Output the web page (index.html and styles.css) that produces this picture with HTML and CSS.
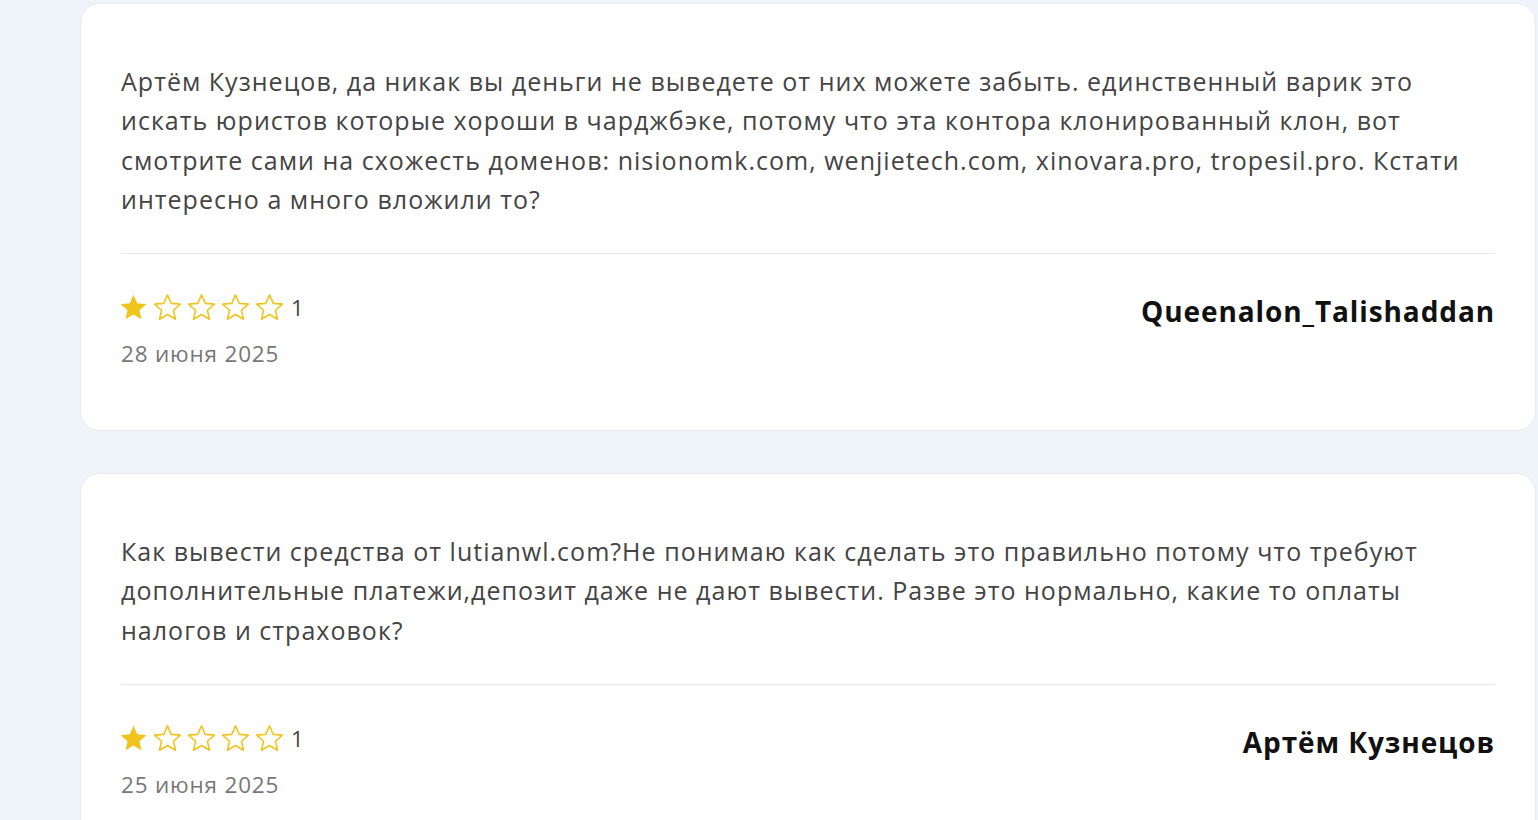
FILE: index.html
```html
<!DOCTYPE html>
<html lang="ru">
<head>
  <meta charset="UTF-8">
  <title>Отзывы</title>
  <link rel="stylesheet" href="styles.css">
</head>
<body>
  <div class="reviews">
    <div class="review">
      <p class="review-text">Артём Кузнецов, да никак вы деньги не выведете от них можете забыть. единственный варик это искать юристов которые хороши в чарджбэке, потому что эта контора клонированный клон, вот смотрите сами на схожесть доменов: nisionomk.com, wenjietech.com, xinovara.pro, tropesil.pro. Кстати интересно а много вложили то?</p>
      <div class="review-foot">
        <div class="review-meta">
          <div class="stars">
            <svg class="star" viewBox="0 0 24 24"><path class="full" d="M12 2.2l2.9 6.6 7.1.6-5.4 4.7 1.6 7-6.2-3.7-6.2 3.7 1.6-7L2 9.4l7.1-.6z"/></svg>
            <svg class="star" viewBox="0 0 24 24"><path class="empty" d="M12 2.2l2.9 6.6 7.1.6-5.4 4.7 1.6 7-6.2-3.7-6.2 3.7 1.6-7L2 9.4l7.1-.6z"/></svg>
            <svg class="star" viewBox="0 0 24 24"><path class="empty" d="M12 2.2l2.9 6.6 7.1.6-5.4 4.7 1.6 7-6.2-3.7-6.2 3.7 1.6-7L2 9.4l7.1-.6z"/></svg>
            <svg class="star" viewBox="0 0 24 24"><path class="empty" d="M12 2.2l2.9 6.6 7.1.6-5.4 4.7 1.6 7-6.2-3.7-6.2 3.7 1.6-7L2 9.4l7.1-.6z"/></svg>
            <svg class="star" viewBox="0 0 24 24"><path class="empty" d="M12 2.2l2.9 6.6 7.1.6-5.4 4.7 1.6 7-6.2-3.7-6.2 3.7 1.6-7L2 9.4l7.1-.6z"/></svg>
            <span class="score">1</span>
          </div>
          <div class="date">28 июня 2025</div>
        </div>
        <div class="author">Queenalon_Talishaddan</div>
      </div>
    </div>

    <div class="review">
      <p class="review-text">Как вывести средства от lutianwl.com?Не понимаю как сделать это правильно потому что требуют дополнительные платежи,депозит даже не дают вывести. Разве это нормально, какие то оплаты налогов и страховок?</p>
      <div class="review-foot">
        <div class="review-meta">
          <div class="stars">
            <svg class="star" viewBox="0 0 24 24"><path class="full" d="M12 2.2l2.9 6.6 7.1.6-5.4 4.7 1.6 7-6.2-3.7-6.2 3.7 1.6-7L2 9.4l7.1-.6z"/></svg>
            <svg class="star" viewBox="0 0 24 24"><path class="empty" d="M12 2.2l2.9 6.6 7.1.6-5.4 4.7 1.6 7-6.2-3.7-6.2 3.7 1.6-7L2 9.4l7.1-.6z"/></svg>
            <svg class="star" viewBox="0 0 24 24"><path class="empty" d="M12 2.2l2.9 6.6 7.1.6-5.4 4.7 1.6 7-6.2-3.7-6.2 3.7 1.6-7L2 9.4l7.1-.6z"/></svg>
            <svg class="star" viewBox="0 0 24 24"><path class="empty" d="M12 2.2l2.9 6.6 7.1.6-5.4 4.7 1.6 7-6.2-3.7-6.2 3.7 1.6-7L2 9.4l7.1-.6z"/></svg>
            <svg class="star" viewBox="0 0 24 24"><path class="empty" d="M12 2.2l2.9 6.6 7.1.6-5.4 4.7 1.6 7-6.2-3.7-6.2 3.7 1.6-7L2 9.4l7.1-.6z"/></svg>
            <span class="score">1</span>
          </div>
          <div class="date">25 июня 2025</div>
        </div>
        <div class="author">Артём Кузнецов</div>
      </div>
    </div>
  </div>
</body>
</html>
```

FILE: styles.css
```css
body {
  margin: 0;
  background: #eff3fa;
  font-family: 'Open Sans', 'Noto Sans', sans-serif;
  color: #444;
}
.reviews {
  padding: 3px 2px 0 80px;
  display: flex;
  flex-direction: column;
  gap: 42px;
}
.review {
  background: #fff;
  border: 1px solid #e9ebee;
  border-radius: 20px;
  padding: 58px 40px 61px;
}
.review-text {
  margin: 0;
  font-size: 25px;
  letter-spacing: 1.02px;
  line-height: 39.3px;
  color: #444;
}
.review-foot {
  margin-top: 34px;
  border-top: 1px solid #e4e6e9;
  padding-top: 37px;
  display: flex;
  justify-content: space-between;
  align-items: flex-start;
}
.stars {
  display: flex;
  align-items: center;
  gap: 3px;
  height: 32px;
  margin-left: -3px;
}
.star {
  width: 31px;
  height: 31px;
}
.star .full {
  fill: #efc41c;
}
.star .empty {
  fill: none;
  stroke: #efc41c;
  stroke-width: 1.2;
  stroke-linejoin: round;
}
.score {
  font-size: 22px;
  color: #444;
  margin-left: 3px;
}
.date {
  margin-top: 15px;
  font-size: 22.5px;
  letter-spacing: 0.8px;
  color: #777;
}
.author {
  margin-top: 1px;
  font-size: 28px;
  letter-spacing: 0.9px;
  font-weight: 700;
  color: #111;
}
```
